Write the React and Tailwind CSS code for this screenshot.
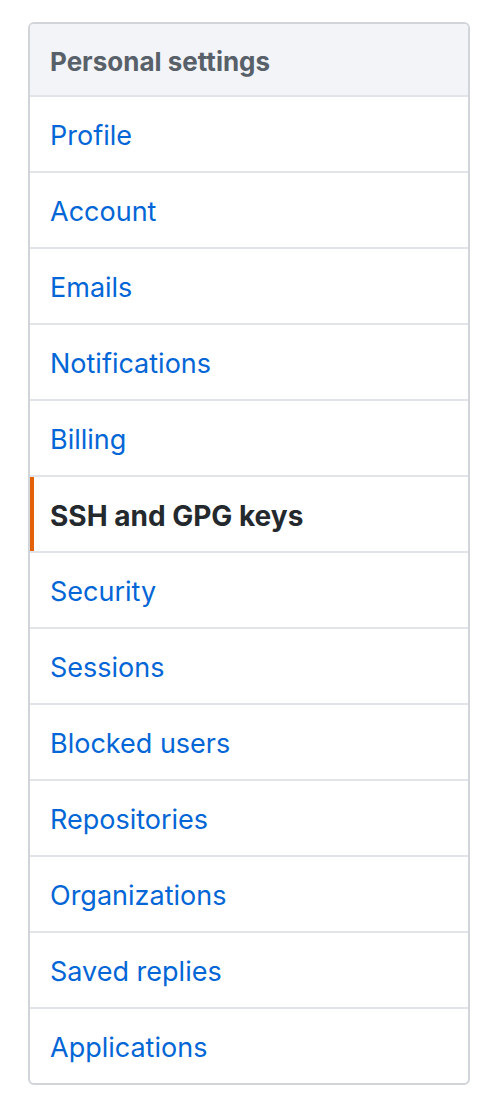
import React from "react";

const items = [
  "Profile",
  "Account",
  "Emails",
  "Notifications",
  "Billing",
  "SSH and GPG keys",
  "Security",
  "Sessions",
  "Blocked users",
  "Repositories",
  "Organizations",
  "Saved replies",
  "Applications",
];

const selected = "SSH and GPG keys";

export default function App() {
  return (
    <div className="min-h-[1112px] bg-white pt-[22px] pl-[28px]" style={{ fontFamily: "Inter, 'Liberation Sans', sans-serif" }}>
      <nav className="w-[442px] rounded-[6px] border-2 border-[#d1d5da] overflow-hidden">
        <div className="h-[73px] flex items-center px-[20px] pt-[3px] bg-[#f3f4f8] border-b-2 border-[#e1e4e8] text-[26px] font-bold text-[#586069]">
          Personal settings
        </div>
        {items.map((item, i) => {
          const active = item === selected;
          const last = i === items.length - 1;
          return (
            <a
              key={item}
              href="#"
              className={
                "relative flex items-center px-[20px] pt-[4px] " +
                (last ? "h-[74px] " : "h-[76px] border-b-2 border-[#e1e4e8] ") +
                (active ? "text-[28px] font-bold text-[#24292e]" : "text-[27px] text-[#0366d6]")
              }
            >
              {active && <span className="absolute left-0 top-0 bottom-0 w-[4px] bg-[#e36209]" />}
              {item}
            </a>
          );
        })}
      </nav>
    </div>
  );
}
